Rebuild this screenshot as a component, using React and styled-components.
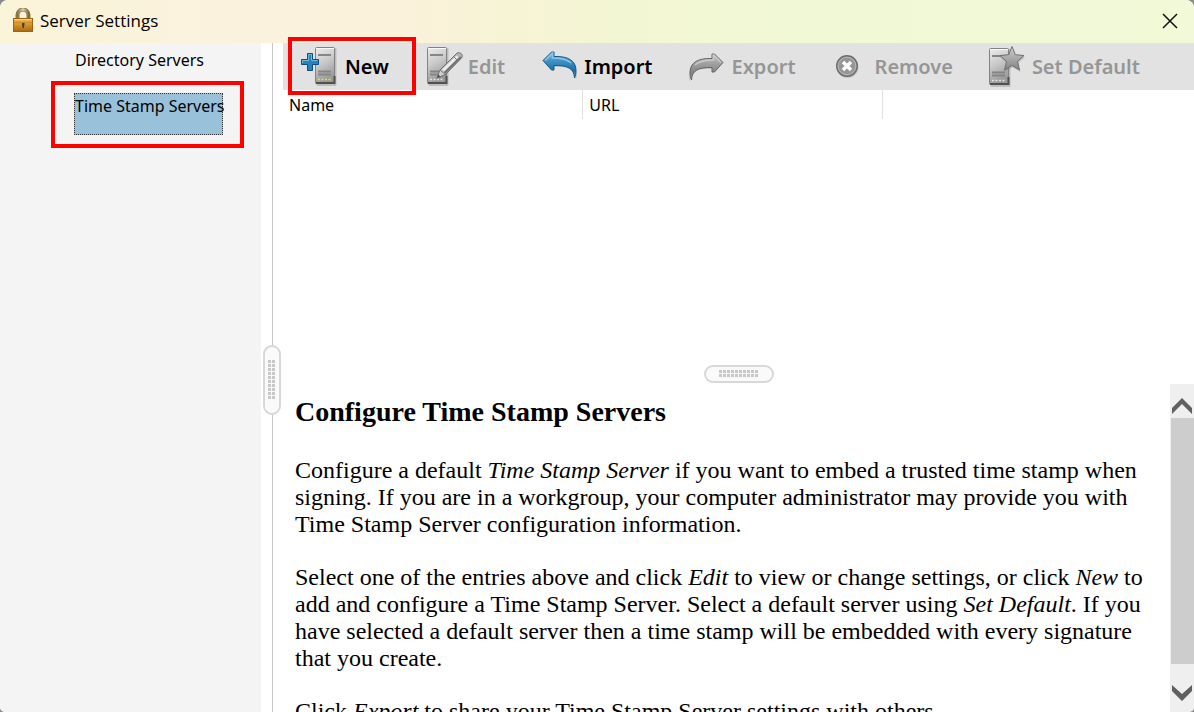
import React from "react";
import styled, { createGlobalStyle } from "styled-components";

const UI_FONT = '"Noto Sans", "Open Sans", "Liberation Sans", sans-serif';

const GlobalStyle = createGlobalStyle`
  *, *::before, *::after { box-sizing: border-box; }
  body { margin: 0; background: #8b8b8b; color: #000; font-family: ${UI_FONT}; }
  button { font: inherit; color: inherit; border: 0; padding: 0; background: none; }
`;

const Window = styled.div`
  display: grid;
  grid-template-rows: 43px minmax(0, 1fr);
  height: 100vh;
  overflow: hidden;
  background: #fff;
  border-radius: 8px 8px 5px 5px;
`;

const TitleBar = styled.header`
  display: flex;
  align-items: center;
  gap: 6px;
  padding: 0 16px 2px 12px;
  background: linear-gradient(90deg, #faf4d8 0%, #faf2de 20%, #faf2da 34%, #f4f6d3 50%, #f1f8d5 66%, #f2f9d8 100%);
`;

const Title = styled.h1`
  flex: 1;
  margin: 0;
  font: 400 17px/24px "Open Sans", ${UI_FONT};
`;

const CloseButton = styled.button`
  display: grid;
  place-items: center;
  width: 16px;
  height: 32px;
`;

const Body = styled.div`
  display: grid;
  grid-template-columns: 261px 22px minmax(0, 1fr);
  min-height: 0;
`;

const Sidebar = styled.nav`
  display: flex;
  flex-direction: column;
  align-items: flex-start;
  gap: 4px;
  padding: 4px 0 0 74px;
  background: #f4f4f4;
`;

const SidebarItem = styled.button`
  position: relative;
  width: 149px;
  height: 42px;
  padding: 0 0 16px;
  border: 1px dotted ${(p) => (p.$selected ? "#333" : "transparent")};
  background: ${(p) => (p.$selected ? "#9ac1da" : "transparent")};
  font-size: 16px;
  line-height: 24px;
  text-align: left;
  white-space: nowrap;
`;

const Highlight = styled.span`
  position: absolute;
  inset: ${(p) => p.$inset};
  border: 4px solid #f00;
  pointer-events: none;
`;

const VerticalSplitter = styled.div`
  display: flex;
  align-items: center;
  justify-content: center;
  padding-top: 4px;
  background: linear-gradient(#c8c8c8, #c8c8c8) center / 1px 100% no-repeat;
`;

const HorizontalSplitter = styled.div`
  display: flex;
  align-items: center;
  justify-content: center;
`;

const Grip = styled.div`
  display: grid;
  place-items: center;
  width: ${(p) => (p.$vertical ? "18px" : "70px")};
  height: ${(p) => (p.$vertical ? "70px" : "18px")};
  border: 2px solid #d8d8d8;
  border-radius: 9px;
  background: #fafafa;

  &::before {
    content: "";
    width: ${(p) => (p.$vertical ? "8px" : "40px")};
    height: ${(p) => (p.$vertical ? "40px" : "8px")};
    background:
      linear-gradient(90deg, transparent 3px, #fafafa 3px) 0 0 / 4px 4px,
      linear-gradient(#c8c8c8 3px, #fafafa 3px) 0 0 / 4px 4px;
  }
`;

const Main = styled.main`
  display: grid;
  grid-template-rows: 47px minmax(0, 5fr) 20px minmax(0, 6fr);
  min-width: 0;
  min-height: 0;
`;

const Toolbar = styled.div`
  display: flex;
  align-items: center;
  gap: 35px;
  padding-left: 18px;
  background: #e2e2e2;
`;

const ToolButton = styled.button`
  position: relative;
  display: flex;
  align-items: center;
  gap: 8px;
  height: 47px;
  font-size: 20px;
  font-weight: 600;
  white-space: nowrap;
  color: ${(p) => (p.disabled ? "#969696" : "#000")};

  svg { flex: none; overflow: visible; }
`;

const ServerList = styled.div`
  overflow: hidden;
`;

const ServerTable = styled.table`
  border-collapse: collapse;
  table-layout: fixed;
  width: 600px;
`;

const HeaderCell = styled.th`
  height: 29px;
  padding: 0 6px;
  border-right: 1px solid #e2e2e2;
  font-size: 16px;
  font-weight: 400;
  line-height: 24px;
  text-align: left;
`;

const HelpPane = styled.section`
  display: grid;
  grid-template-columns: minmax(0, 1fr) 24px;
  min-height: 0;
`;

const HelpText = styled.article`
  overflow: auto;
  scrollbar-width: none;
  padding: 12px 12px 0;
  font: 24px/27px "Liberation Serif", "Times New Roman", serif;

  p { margin: 0 0 26px; }
`;

const HelpTitle = styled.h2`
  margin: 0 0 29px;
  font-size: 28px;
  line-height: 32px;
`;

const Scrollbar = styled.div`
  display: grid;
  grid-template-rows: 34px minmax(0, 1fr) 34px;
  background: #efefef;
`;

const ScrollButton = styled.button`
  display: grid;
  place-items: ${(p) => (p.$down ? "end" : "center")} center;
  padding-bottom: ${(p) => (p.$down ? "11px" : "0")};
  padding-top: ${(p) => (p.$down ? "0" : "10px")};
`;

const ScrollThumb = styled.div`
  margin: 0 0 14px 1px;
  background: #cdcdcd;
`;

function LockIcon() {
  return (
    <svg width="22" height="25" viewBox="0 0 22 25" aria-hidden="true">
      <defs>
        <linearGradient id="lockBody" x1="0" y1="0" x2="0" y2="1">
          <stop offset="0" stopColor="#edb754" />
          <stop offset="0.4" stopColor="#d99a2c" />
          <stop offset="1" stopColor="#a96914" />
        </linearGradient>
        <linearGradient id="lockShackle">
          <stop offset="0" stopColor="#8c7442" />
          <stop offset="0.5" stopColor="#e2d9b5" />
          <stop offset="1" stopColor="#84683a" />
        </linearGradient>
      </defs>
      <path d="M5.500 12V7a5.500 5.500 0 0 1 11 0v5" fill="none" stroke="#8a7649" strokeWidth="4" />
      <path d="M5.500 12V7a5.500 5.500 0 0 1 11 0v5" fill="none" stroke="url(#lockShackle)" strokeWidth="2.400" />
      <rect x="1.500" y="10.500" width="19" height="13" fill="url(#lockBody)" stroke="#9c6316" />
      <path d="M2 14.500h18M2 18.500h18" stroke="#c48523" opacity=".7" />
      <path d="M2 11.500h18" stroke="#f6cf7f" />
      <path d="M10 15h2.500v2l-.500 1v2h-1.500v-2l-.500-1z" fill="#3c3d42" />
    </svg>
  );
}

function ServerBody({ x, lights = "#e3e3e3" }) {
  return (
    <g transform={`translate(${x} 0)`}>
      <rect x="1.500" y="2" width="20" height="38" rx="1" fill="#777" opacity=".35" />
      <rect x="0.500" y="1.500" width="19" height="36" rx="1" fill="url(#serverBody)" stroke="#828282" />
      <path d="M1 2.500h18" stroke="#f8f8f8" />
      <path d="M1 37h18.500V30" fill="none" stroke="#505050" strokeWidth="2" />
      <path d="M3 9h13M3 25.500h13M3 28.500h13" stroke="#858585" strokeWidth="2" />
      <path d="M3 33.500h14" stroke={lights} strokeWidth="1.600" strokeDasharray="2 1.500" />
    </g>
  );
}

function ServerGradient() {
  return (
    <defs>
      <linearGradient id="serverBody" x1="0" y1="0" x2="0.300" y2="1">
        <stop offset="0" stopColor="#ededed" />
        <stop offset="0.500" stopColor="#c9c9c9" />
        <stop offset="1" stopColor="#989898" />
      </linearGradient>
    </defs>
  );
}

function NewIcon() {
  return (
    <svg width="36" height="41" viewBox="0 0 36 41" aria-hidden="true">
      <ServerGradient />
      <ServerBody x={14} lights="#dcea2c" />
      <path d="M6.500 7.500h5v6h6v5h-6v6h-5v-6h-6v-5h6z" fill="#2a82bd" stroke="#0b4d83" />
      <path d="M7.500 14.500v-6h3v6M1.500 17v-2.500h6M11 14.500h5.500" fill="none" stroke="#75b8df" />
    </svg>
  );
}

function EditIcon() {
  return (
    <svg width="36" height="41" viewBox="-3 0 36 41" aria-hidden="true">
      <ServerGradient />
      <ServerBody x={0} />
      <path d="M10 32l3-8L29 8c1.500-1.500 3-2 5-.500 2 1.500 1.500 3.500 0 5L18 29z" fill="#b4b4b4" stroke="#707070" />
      <path d="M14.500 24L29.500 9.500l2 1.500-14 14z" fill="#ededed" />
      <path d="M17.500 27L34 11" stroke="#6f6f6f" strokeWidth="1.800" />
      <path d="M13 24l5 4.500-8 3.500z" fill="#cecece" stroke="#777" strokeWidth=".8" />
      <path d="M10 32l1.300-3.500 2.200 2z" fill="#4c4c4c" />
      <path d="M27 11l4 4" stroke="#777" />
    </svg>
  );
}

function CurvedArrow({ id, light, mid, dark, edge, flip }) {
  return (
    <svg width="36" height="32" viewBox={flip ? "0 0 36 32" : "-2 2 36 32"} aria-hidden="true">
      <defs>
        <linearGradient id={id} x1="0" y1="0" x2="0" y2="1">
          <stop offset="0" stopColor={light} />
          <stop offset="0.350" stopColor={mid} />
          <stop offset="0.700" stopColor={dark} />
          <stop offset="1" stopColor={edge} stopOpacity=".5" />
        </linearGradient>
      </defs>
      <g transform={flip ? "translate(36 0) scale(-1 1)" : undefined}>
        <path d="M3 13l8 8v-4c11-1 20 0 22 13 4-13-5-21-22-20V5z" fill="#888" opacity=".3" transform="translate(1 1)" />
        <path d="M1 11.500L9.500 3H12v4.500c14-.500 22 4 22 14 0 3-.500 5-1.500 7.500-.500-10-7-12.500-20.500-12.500V21H9.500z" fill={`url(#${id})`} stroke={edge} strokeWidth="1" />
        <path d="M3 11.500l7.500-7.500v5c9 0 15 1.500 18.500 5" fill="none" stroke={light} strokeWidth="1.500" />
      </g>
    </svg>
  );
}

function RemoveIcon() {
  return (
    <svg width="36" height="26" viewBox="2 1 36 26" aria-hidden="true">
      <circle cx="18.500" cy="14" r="11" fill="#888" opacity=".35" />
      <circle cx="18" cy="13" r="10.300" fill="#969696" stroke="#6e6e6e" strokeWidth="1.400" />
      <circle cx="18" cy="13" r="8.800" fill="none" stroke="#b9b9b9" />
      <path d="M14 9l8 8M22 9l-8 8" stroke="#fff" strokeWidth="3.400" />
    </svg>
  );
}

function DefaultIcon() {
  return (
    <svg width="36" height="43" viewBox="0 0 36 43" aria-hidden="true">
      <ServerGradient />
      <defs>
        <linearGradient id="starFill" x1="0" y1="0" x2="0" y2="1">
          <stop offset="0" stopColor="#d0d0d0" />
          <stop offset="1" stopColor="#828282" />
        </linearGradient>
      </defs>
      <g transform="translate(0 2)"><ServerBody x={1} /></g>
      <path d="M24.500 3l3.500 8 9 1-6.500 6 2 9-8-4.500-8 4.500 2-9L12 12l9-1z" fill="#777" opacity=".3" />
      <path d="M24 1.500l3.300 8.200 8.700.800-6.500 6 2 8.500-7.500-4.500-7.500 4.500 2-8.500-6.500-6 8.700-.800z" fill="url(#starFill)" stroke="#707070" />
    </svg>
  );
}

function Chevron({ down }) {
  return (
    <svg width="20" height="16" viewBox="0 0 20 16" aria-hidden="true">
      <path d={down ? "M0 0l10 9 10-9v6L10 16 0 6z" : "M0 16l10-10 10 10v-6L10 0 0 10z"} fill="#606060" />
    </svg>
  );
}

const tools = [
  { label: "New", icon: <NewIcon />, highlighted: true },
  { label: "Edit", icon: <EditIcon />, disabled: true },
  { label: "Import", icon: <CurvedArrow id="importFill" light="#8cc4e2" mid="#3d92c5" dark="#1d70a8" edge="#145a8c" /> },
  { label: "Export", icon: <CurvedArrow id="exportFill" light="#c9c9c9" mid="#a2a2a2" dark="#858585" edge="#676767" flip />, disabled: true },
  { label: "Remove", icon: <RemoveIcon />, disabled: true },
  { label: "Set Default", icon: <DefaultIcon />, disabled: true },
];

export default function App() {
  return (
    <>
      <GlobalStyle />
      <Window>
        <TitleBar>
          <LockIcon />
          <Title>Server Settings</Title>
          <CloseButton aria-label="Close">
            <svg width="16" height="16" viewBox="0 0 16 16" aria-hidden="true">
              <path d="M1 1l14 14M15 1L1 15" stroke="#111" strokeWidth="1.500" />
            </svg>
          </CloseButton>
        </TitleBar>
        <Body>
          <Sidebar aria-label="Server types">
            <SidebarItem>Directory Servers</SidebarItem>
            <SidebarItem $selected aria-current="true">
              Time Stamp Servers
              <Highlight $inset="-13px -22px -14px -24px" />
            </SidebarItem>
          </Sidebar>
          <VerticalSplitter role="separator" aria-orientation="vertical">
            <Grip $vertical />
          </VerticalSplitter>
          <Main>
            <Toolbar role="toolbar" aria-label="Server actions">
              {tools.map((tool) => (
                <ToolButton key={tool.label} disabled={tool.disabled}>
                  {tool.icon}
                  {tool.label}
                  {tool.highlighted && <Highlight $inset="-6px -27px -5px -13px" />}
                </ToolButton>
              ))}
            </Toolbar>
            <ServerList>
              <ServerTable>
                <thead>
                  <tr>
                    <HeaderCell scope="col">Name</HeaderCell>
                    <HeaderCell scope="col">URL</HeaderCell>
                  </tr>
                </thead>
              </ServerTable>
            </ServerList>
            <HorizontalSplitter role="separator" aria-orientation="horizontal">
              <Grip />
            </HorizontalSplitter>
            <HelpPane>
              <HelpText>
                <HelpTitle>Configure Time Stamp Servers</HelpTitle>
                <p>
                  Configure a default <em>Time Stamp Server</em> if you want to embed a trusted time stamp when
                  signing. If you are in a workgroup, your computer administrator may provide you with Time Stamp
                  Server configuration information.
                </p>
                <p>
                  Select one of the entries above and click <em>Edit</em> to view or change settings, or click{" "}
                  <em>New</em> to add and configure a Time Stamp Server. Select a default server using{" "}
                  <em>Set Default</em>. If you have selected a default server then a time stamp will be embedded with
                  every signature that you create.
                </p>
                <p>
                  Click <em>Export</em> to share your Time Stamp Server settings with others.
                </p>
              </HelpText>
              <Scrollbar>
                <ScrollButton aria-label="Scroll up"><Chevron /></ScrollButton>
                <ScrollThumb />
                <ScrollButton $down aria-label="Scroll down"><Chevron down /></ScrollButton>
              </Scrollbar>
            </HelpPane>
          </Main>
        </Body>
      </Window>
    </>
  );
}
